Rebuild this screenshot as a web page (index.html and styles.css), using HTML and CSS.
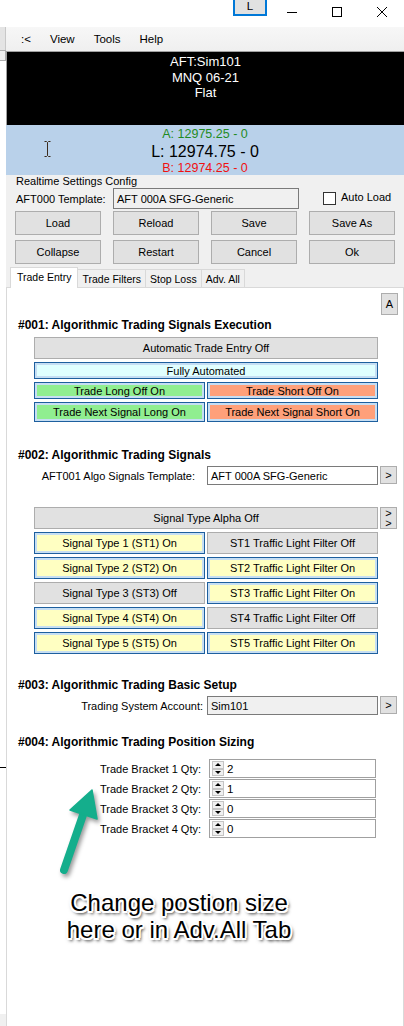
FILE: index.html
```html
<!DOCTYPE html>
<html>
<head>
<meta charset="utf-8">
<title>AFT</title>
<link rel="stylesheet" href="styles.css">
</head>
<body>
<div class="titlebar">
  <div class="lbtn">L</div>
  <div class="wctl"><svg width="10" height="10" viewBox="0 0 10 10"><path d="M0 5.5H10" stroke="#000" stroke-width="1" fill="none"/></svg></div>
  <div class="wctl"><svg width="10" height="10" viewBox="0 0 10 10"><rect x="0.5" y="0.5" width="9" height="9" stroke="#000" stroke-width="1" fill="none"/></svg></div>
  <div class="wctl"><svg width="10" height="10" viewBox="0 0 10 10"><path d="M0 0L10 10M10 0L0 10" stroke="#000" stroke-width="1" fill="none"/></svg></div>
</div>
<div class="app">
  <div class="edge">
    <div class="edge-top"></div>
    <div class="edge-box"></div>
    <div class="edge-gap"></div>
    <div class="edge-line"></div>
    <div class="edge-fill"></div>
    <div class="edge-bottom"></div>
  </div>
  <div class="win">
    <nav class="menubar">
      <span>:&lt;</span><span>View</span><span>Tools</span><span>Help</span>
    </nav>
    <div class="status">
      <div>AFT:Sim101</div>
      <div>MNQ 06-21</div>
      <div>Flat</div>
    </div>
    <div class="quote">
      <svg class="ibeam" width="7" height="16" viewBox="0 0 7 16"><path d="M0.5 0.5H2.5L3.5 1.5L4.5 0.5H6.5M3.5 1.5V14.5M0.5 15.5H2.5L3.5 14.5L4.5 15.5H6.5" stroke="#3b2a1c" stroke-width="1" fill="none"/></svg>
      <div class="ask">A: 12975.25 - 0</div>
      <div class="last">L: 12974.75 - 0</div>
      <div class="bid">B: 12974.25 - 0</div>
    </div>
    <div class="config">
      <div class="group-title">Realtime Settings Config</div>
      <div class="tpl-row">
        <span class="tpl-label">AFT000 Template:</span>
        <div class="field ro tpl-field">AFT 000A SFG-Generic</div>
        <span class="check"></span>
        <span class="check-label">Auto Load</span>
      </div>
      <div class="btn-grid">
        <button class="btn">Load</button>
        <button class="btn">Reload</button>
        <button class="btn">Save</button>
        <button class="btn">Save As</button>
        <button class="btn">Collapse</button>
        <button class="btn">Restart</button>
        <button class="btn">Cancel</button>
        <button class="btn">Ok</button>
      </div>
      <div class="tabs">
        <div class="tab sel">Trade Entry</div>
        <div class="tab">Trade Filters</div>
        <div class="tab">Stop Loss</div>
        <div class="tab">Adv. All</div>
      </div>
    </div>
    <div class="panel">
      <div class="a-row"><button class="btn small tall">A</button></div>

      <h3 class="sec first">#001: Algorithmic Trading Signals Execution</h3>
      <div class="grid1">
        <button class="btn span2">Automatic Trade Entry Off</button>
        <button class="btn blue cyan span2">Fully Automated</button>
        <button class="btn blue green">Trade Long Off On</button>
        <button class="btn blue salmon">Trade Short Off On</button>
        <button class="btn blue green">Trade Next Signal Long On</button>
        <button class="btn blue salmon">Trade Next Signal Short On</button>
      </div>

      <h3 class="sec s2">#002: Algorithmic Trading Signals</h3>
      <div class="frow tpl2">
        <span class="flabel l-algo">AFT001 Algo Signals Template:</span>
        <div class="field wfield">AFT 000A SFG-Generic</div>
        <button class="btn small">&gt;</button>
      </div>
      <div class="grid2">
        <button class="btn span2">Signal Type Alpha Off</button>
        <button class="btn small dbl"><span>&gt;</span><span>&gt;</span></button>
        <button class="btn blue yellow">Signal Type 1 (ST1) On</button>
        <button class="btn">ST1 Traffic Light Filter Off</button>
        <span></span>
        <button class="btn blue yellow">Signal Type 2 (ST2) On</button>
        <button class="btn blue yellow">ST2 Traffic Light Filter On</button>
        <span></span>
        <button class="btn">Signal Type 3 (ST3) Off</button>
        <button class="btn blue yellow">ST3 Traffic Light Filter On</button>
        <span></span>
        <button class="btn blue yellow">Signal Type 4 (ST4) On</button>
        <button class="btn">ST4 Traffic Light Filter Off</button>
        <span></span>
        <button class="btn blue yellow">Signal Type 5 (ST5) On</button>
        <button class="btn blue yellow">ST5 Traffic Light Filter On</button>
        <span></span>
      </div>

      <h3 class="sec s3">#003: Algorithmic Trading Basic Setup</h3>
      <div class="frow acct">
        <span class="flabel l-acct">Trading System Account:</span>
        <div class="field ro wfield">Sim101</div>
        <button class="btn small">&gt;</button>
      </div>

      <h3 class="sec s4">#004: Algorithmic Trading Position Sizing</h3>
      <div class="brackets">
        <div class="brow"><span class="flabel l-br">Trade Bracket 1 Qty:</span><div class="num"><span class="spin"><i class="up"></i><i class="dn"></i></span>2</div></div>
        <div class="brow"><span class="flabel l-br">Trade Bracket 2 Qty:</span><div class="num"><span class="spin"><i class="up"></i><i class="dn"></i></span>1</div></div>
        <div class="brow"><span class="flabel l-br">Trade Bracket 3 Qty:</span><div class="num"><span class="spin"><i class="up"></i><i class="dn"></i></span>0</div></div>
        <div class="brow"><span class="flabel l-br">Trade Bracket 4 Qty:</span><div class="num"><span class="spin"><i class="up"></i><i class="dn"></i></span>0</div></div>
      </div>

      <div class="callout">Change postion size<br>here or in Adv.All Tab</div>

      <svg class="arrow" width="60" height="100" viewBox="0 0 60 100">
        <path d="M33 35L14 90" stroke="#14ae8c" stroke-width="8" stroke-linecap="round" fill="none"/>
        <path d="M42 10L20 30L47 39Z" fill="#14ae8c" stroke="#14ae8c" stroke-width="1.5" stroke-linejoin="round"/>
      </svg>
    </div>
  </div>
</div>
</body>
</html>
```

FILE: styles.css
```css
html, body {
  margin: 0;
  padding: 0;
}
body {
  width: 404px;
  height: 1026px;
  overflow: hidden;
  background: #ffffff;
  font-family: "Liberation Sans", Arial, sans-serif;
  font-size: 11px;
  color: #000;
}

/* title bar */
.titlebar {
  height: 27px;
  display: flex;
  justify-content: flex-end;
  align-items: flex-start;
}
.lbtn {
  width: 30px;
  height: 18px;
  margin-top: -6px;
  margin-right: 2px;
  border: 2px solid #0078d7;
  background: #e1e1e1;
  text-align: center;
  line-height: 20px;
  font-size: 11.5px;
}
.wctl {
  width: 45px;
  height: 23px;
  display: flex;
  align-items: center;
  justify-content: center;
}
.wctl svg { display: block; }

/* app body */
.app {
  display: flex;
  height: 999px;
}
.edge {
  width: 6px;
  display: flex;
  flex-direction: column;
}
.edge-top {
  height: 23px;
  background: #e4e4e4;
  box-sizing: border-box;
  border-right: 1px solid #c8c8c8;
}
.edge-box {
  height: 11px;
  background: #f0f0f0;
  box-sizing: border-box;
  border: 1px solid #adadad;
  border-left: none;
}
.edge-gap { height: 706px; }
.edge-line { height: 1px; background: #000; }
.edge-fill { flex: 1; }
.edge-bottom {
  height: 12px;
  background: #f0f0f0;
}

.win {
  width: 398px;
  display: flex;
  flex-direction: column;
}

.menubar {
  height: 24px;
  display: flex;
  align-items: center;
  gap: 19px;
  padding-left: 15px;
  background: linear-gradient(#f7f7f7, #efefef);
  font-size: 11.5px;
}

.status {
  height: 74px;
  box-sizing: border-box;
  background: #000;
  border-top: 1px solid #a0a0a0;
  border-left: 1px solid #a0a0a0;
  color: #fff;
  text-align: center;
  font-size: 13px;
  line-height: 15.5px;
  padding-top: 2px;
}

.quote {
  position: relative;
  height: 50px;
  box-sizing: border-box;
  padding-top: 1.5px;
  background: #b9d1ea;
  text-align: center;
}
.ibeam {
  position: absolute;
  left: 38px;
  top: 16px;
}
.ask { color: #1f8b1f; font-size: 12.5px; line-height: 15px; }
.last { color: #000; font-size: 16px; line-height: 19px; }
.bid { color: #f01010; font-size: 12.5px; line-height: 15px; }

/* config area */
.config {
  background: #f0f0f0;
  display: flex;
  flex-direction: column;
}
.group-title {
  margin-left: 10px;
  line-height: 13px;
  height: 13px;
}
.tpl-row {
  margin-left: 10px;
  height: 21px;
  display: flex;
  align-items: center;
}
.tpl-label { width: 97px; }
.field {
  box-sizing: border-box;
  border: 1px solid #7a7a7a;
  background: #fff;
  padding-left: 3px;
  display: flex;
  align-items: center;
  white-space: nowrap;
  overflow: hidden;
}
.field.ro { background: #f0f0f0; }
.tpl-field { width: 186px; height: 21px; }
.check {
  width: 13px;
  height: 13px;
  box-sizing: border-box;
  border: 1px solid #333;
  background: #fff;
  margin-left: 24px;
}
.check-label { margin-left: 5px; margin-top: -3px; }

.btn-grid {
  margin-left: 9px;
  margin-top: 2px;
  display: grid;
  grid-template-columns: repeat(4, 86px);
  grid-auto-rows: 24px;
  column-gap: 12px;
  row-gap: 5px;
}

.btn {
  font-family: inherit;
  font-size: 11px;
  color: #000;
  margin: 0;
  padding: 0;
  box-sizing: border-box;
  background: #e1e1e1;
  border: 1px solid #adadad;
  border-radius: 0;
  display: flex;
  align-items: center;
  justify-content: center;
  white-space: nowrap;
}
.btn.blue {
  border: 1px solid #1d5f9e;
  box-shadow: inset 0 0 0 2px #c6def3;
}
.btn.cyan { background: #e0ffff; }
.btn.green { background: #90ee90; }
.btn.salmon { background: #ffa07a; }
.btn.yellow { background: #ffffc2; }
.btn.small { width: 17px; }
.btn.tall { height: 22px; }
.btn.dbl {
  flex-direction: column;
  line-height: 10px;
}
.span2 { grid-column: span 2; }

/* tabs */
.tabs {
  margin-left: 4px;
  margin-top: 3px;
  height: 20px;
  display: flex;
  align-items: flex-end;
  font-size: 10.5px;
}
.tab {
  height: 18px;
  box-sizing: border-box;
  padding: 0 4px;
  border: 1px solid #d9d9d9;
  border-bottom: none;
  margin-left: -1px;
  display: flex;
  align-items: center;
  background: #f0f0f0;
}
.tab:first-child { margin-left: 0; }
.tab.sel {
  height: 21px;
  margin-bottom: -1px;
  padding: 0 6px 2px;
  background: #fff;
  position: relative;
  z-index: 1;
}

/* panel */
.panel {
  position: relative;
  flex: 1;
  background: #fff;
  border: 1px solid #d9d9d9;
  border-bottom: none;
  display: flex;
  flex-direction: column;
}
.a-row {
  display: flex;
  justify-content: flex-end;
  padding-right: 5px;
  margin-top: 5px;
}
.sec {
  margin: 0 0 0 11px;
  font-size: 12px;
  font-weight: bold;
  line-height: 14px;
}
.sec.first { margin-top: 3px; }
.sec.s2 { margin-top: 26px; }
.sec.s3 { margin-top: 24px; }
.sec.s4 { margin-top: 20px; }

.grid1 {
  margin-top: 5px;
  margin-left: 27px;
  display: grid;
  grid-template-columns: 171px 171px;
  grid-template-rows: 22px 17px 17px 20px;
  column-gap: 2px;
  row-gap: 3px;
}

.frow {
  height: 19px;
  display: flex;
  align-items: stretch;
  gap: 2px;
}
.tpl2 { margin-top: 4px; }
.acct { margin-top: 4px; }
.flabel {
  box-sizing: border-box;
  width: 198px;
  text-align: right;
  align-self: center;
  white-space: nowrap;
}
.l-algo { padding-right: 10px; }
.l-acct { padding-right: 2px; }
.wfield { width: 171px; }
.frow .btn.small { height: 18px; }

.grid2 {
  margin-top: 22px;
  margin-left: 27px;
  display: grid;
  grid-template-columns: 171px 171px 17px;
  grid-auto-rows: 22px;
  column-gap: 2px;
  row-gap: 3px;
}

.brackets {
  margin-top: 10px;
  display: flex;
  flex-direction: column;
  gap: 1px;
}
.brow {
  height: 19px;
  display: flex;
  align-items: stretch;
}
.l-br {
  width: 202px;
  padding-right: 8px;
}
.num {
  width: 167px;
  box-sizing: border-box;
  border: 1px solid #a0a0a0;
  display: flex;
  align-items: center;
  padding-left: 2px;
  font-size: 11.5px;
}
.spin {
  width: 12px;
  height: 15px;
  margin-right: 3px;
  display: flex;
  flex-direction: column;
}
.spin i {
  flex: 1;
  box-sizing: border-box;
  border: 1px solid #c4c4c4;
  background: #f0f0f0;
  display: flex;
  align-items: center;
  justify-content: center;
}
.spin i::after {
  content: "";
  width: 0;
  height: 0;
  border-left: 3px solid transparent;
  border-right: 3px solid transparent;
}
.spin i.up::after { border-bottom: 3px solid #000; }
.spin i.dn::after { border-top: 3px solid #000; }

.callout {
  margin-top: 51px;
  margin-left: 42px;
  width: 260px;
  text-align: center;
  font-size: 24px;
  line-height: 27px;
  color: #000;
  text-shadow:
    -2px 0 #fff, 2px 0 #fff, 0 -2px #fff, 0 2px #fff,
    -1.5px -1.5px #fff, 1.5px -1.5px #fff, -1.5px 1.5px #fff, 1.5px 1.5px #fff,
    2px 3px 3px rgba(0, 0, 0, 0.75),
    1px 2px 4px rgba(0, 0, 0, 0.5);
}

.arrow {
  position: absolute;
  left: 43px;
  top: 492px;
  filter: drop-shadow(2px 3px 2px rgba(0, 0, 0, 0.4));
}
```
